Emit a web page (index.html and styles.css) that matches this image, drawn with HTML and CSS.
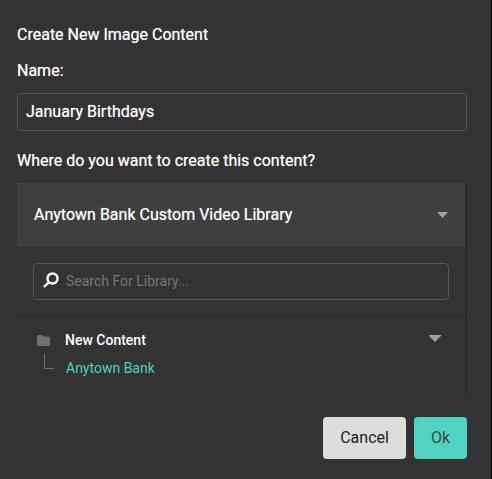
FILE: index.html
```html
<!DOCTYPE html>
<html lang="en">
<head>
<meta charset="utf-8">
<title>Create New Image Content</title>
<meta name="viewport" content="width=device-width, initial-scale=1">
<link rel="stylesheet" href="styles.css">
</head>
<body>
<form class="dialog">
  <h1 class="heading">Create New Image Content</h1>
  <label class="heading" for="name">Name:</label>
  <input class="field name-input" id="name" type="text" value="January Birthdays">
  <h2 class="heading location-heading">Where do you want to create this content?</h2>
  <section class="library">
    <button class="library-toggle" type="button">
      <span>Anytown Bank Custom Video Library</span>
      <svg class="caret" viewBox="0 0 11 6" aria-hidden="true"><path d="M0 0h11L5.500 6z"/></svg>
    </button>
    <div class="search-row">
      <div class="field search">
        <svg class="search-icon" viewBox="0 0 16 16" aria-hidden="true"><circle cx="9.500" cy="6.500" r="5"/><path d="M6 10L1 15"/></svg>
        <input class="search-input" type="text" aria-label="Search for library" placeholder="Search For Library...">
      </div>
    </div>
    <div class="tree">
      <button class="tree-parent" type="button">
        <svg class="folder" viewBox="0 0 13 11" aria-hidden="true"><path d="M1.500 0H5l1.500 1.500h5Q13 1.500 13 3v6.500Q13 11 11.500 11h-10Q0 11 0 9.500v-8Q0 0 1.500 0z"/></svg>
        <span>New Content</span>
        <svg class="caret tree-caret" viewBox="0 0 12 7" aria-hidden="true"><path d="M0 0h12v1L6 7 0 1z"/></svg>
      </button>
      <div class="tree-child">
        <span class="branch"></span>
        <a class="tree-link" href="#">Anytown Bank</a>
      </div>
    </div>
  </section>
  <div class="actions">
    <button class="button cancel" type="button">Cancel</button>
    <button class="button ok" type="submit">Ok</button>
  </div>
</form>
</body>
</html>
```
FILE: styles.css
```css
* {
  box-sizing: border-box;
}

body {
  margin: 0;
  background: #333;
  color: #fff;
  font: 400 16px/20px Roboto, "Liberation Sans", sans-serif;
}

button,
input {
  font: inherit;
  color: inherit;
}

.dialog {
  display: flex;
  flex-direction: column;
  min-height: 100vh;
  padding: 25px 24px 20px 17px;
  border-right: 1px solid #000;
}

.heading {
  margin: 0 0 16px;
  font-size: 16px;
  font-weight: 400;
}

.heading,
.name-input,
.library-toggle {
  text-shadow: 0 0 1px rgba(255, 255, 255, 0.6);
}

.field {
  width: 100%;
  border: 1px solid #555;
  border-radius: 4px;
  background: transparent;
}

.name-input {
  height: 38px;
  margin-top: -4px;
  padding: 0 8px 2px;
}

.location-heading {
  margin: 20px 0 12px;
}

.library {
  min-height: 210px;
  border-right: 2px solid #2a2a2a;
}

.library-toggle {
  display: flex;
  align-items: center;
  justify-content: space-between;
  width: 100%;
  height: 64px;
  padding: 0 17px;
  border: 0;
  background: #3f3f3f;
}

.caret {
  width: 11px;
  height: 6px;
  fill: #a0a0a0;
}

.search-row {
  padding: 16px;
  border-bottom: 1px solid #282828;
}

.search {
  display: flex;
  gap: 7px;
  height: 37px;
  padding: 0 9px;
}

.search-icon {
  flex: none;
  width: 16px;
  height: 16px;
  margin-top: 8px;
  fill: none;
  stroke: #fff;
  stroke-width: 2.4;
}

.search-input {
  flex: 1;
  min-width: 0;
  padding: 0 0 2px;
  border: 0;
  outline: 0;
  background: transparent;
  font-size: 14px;
}

.search-input::placeholder {
  color: #777;
}

.tree {
  padding: 13px 24px 0 20px;
  font-size: 14px;
}

.tree-parent {
  display: flex;
  align-items: center;
  width: 100%;
  height: 20px;
  padding: 0;
  border: 0;
  background: transparent;
  font-weight: 500;
}

.folder {
  width: 13px;
  height: 11px;
  margin-right: 15px;
  fill: #707070;
}

.tree-caret {
  width: 12px;
  height: 7px;
  margin: 0 0 4px auto;
}

.tree-child {
  display: flex;
  gap: 12px;
  padding: 4px 0 0 7px;
}

.branch {
  width: 10px;
  height: 15px;
  border: solid #707070;
  border-width: 0 0 1px 1px;
}

.tree-link {
  margin-top: 4px;
  color: #4fd1c0;
  text-decoration: none;
}

.actions {
  display: flex;
  justify-content: flex-end;
  gap: 8px;
  margin-top: 24px;
}

.button {
  height: 42px;
  padding: 0 17px;
  border: 0;
  border-radius: 4px;
}

.cancel {
  background: #ddd;
  color: #222;
}

.ok {
  background: #50d3c3;
  color: #444;
}
```
